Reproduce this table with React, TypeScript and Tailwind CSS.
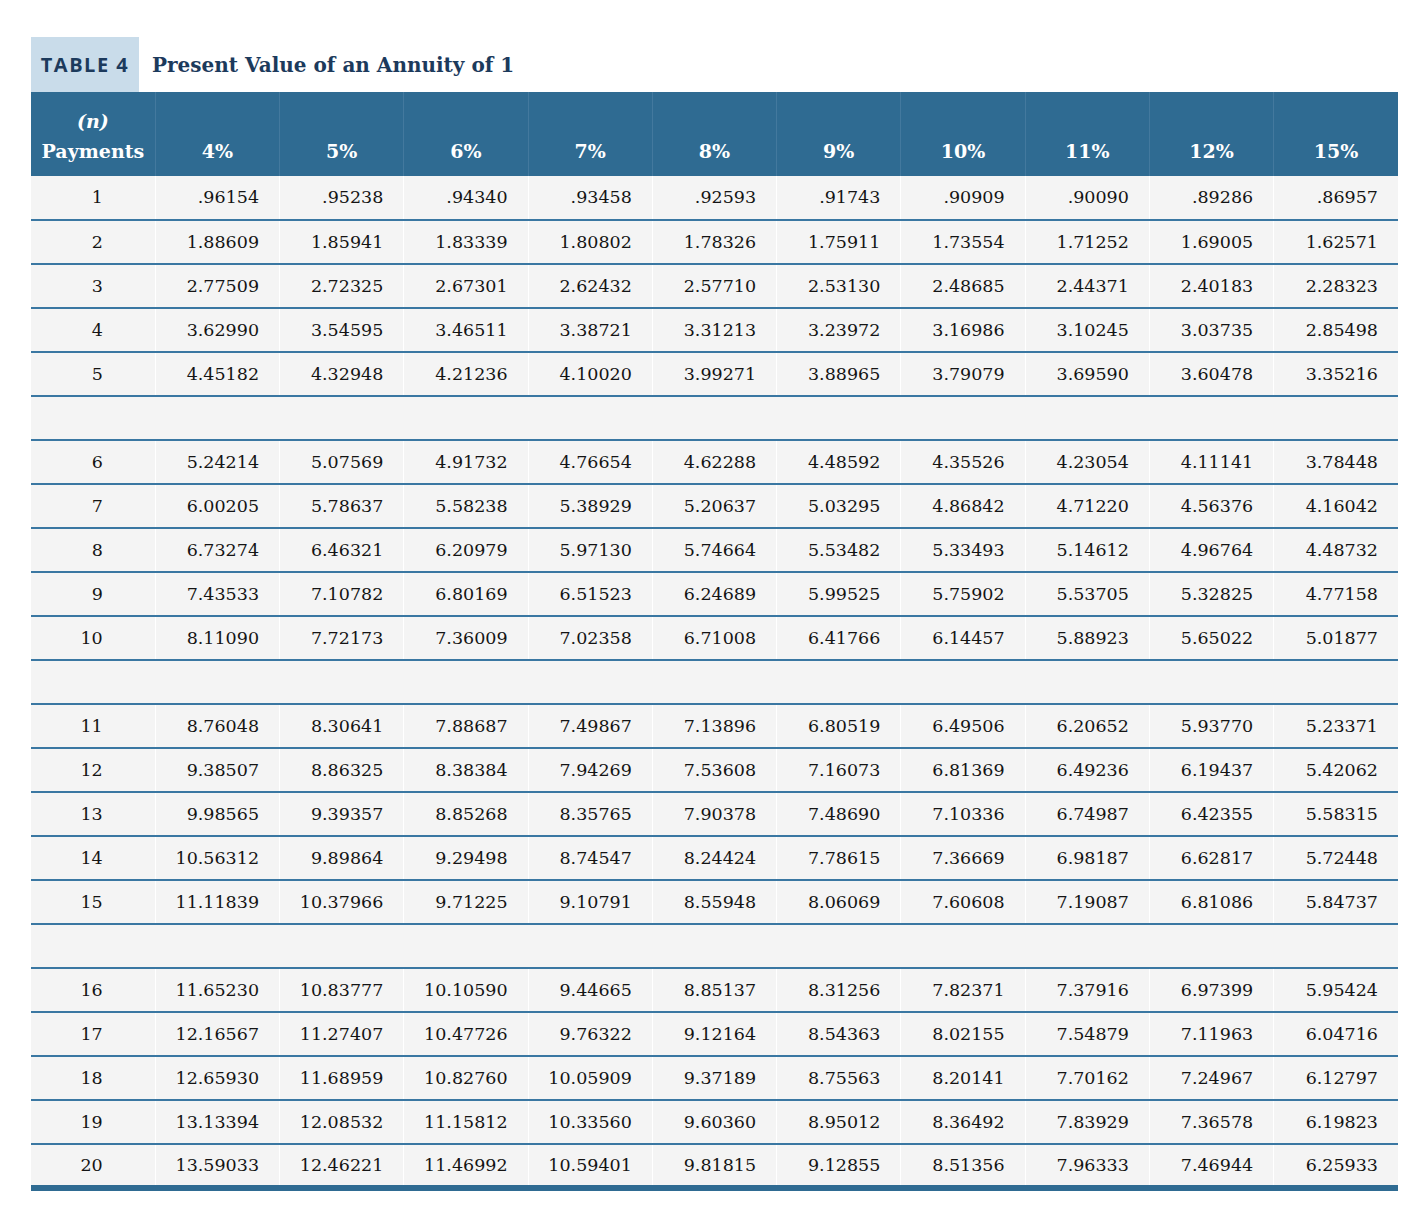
import React from "react";

const RATES = ["4%", "5%", "6%", "7%", "8%", "9%", "10%", "11%", "12%", "15%"];

const ROWS: string[][] = [
  [".96154", ".95238", ".94340", ".93458", ".92593", ".91743", ".90909", ".90090", ".89286", ".86957"],
  ["1.88609", "1.85941", "1.83339", "1.80802", "1.78326", "1.75911", "1.73554", "1.71252", "1.69005", "1.62571"],
  ["2.77509", "2.72325", "2.67301", "2.62432", "2.57710", "2.53130", "2.48685", "2.44371", "2.40183", "2.28323"],
  ["3.62990", "3.54595", "3.46511", "3.38721", "3.31213", "3.23972", "3.16986", "3.10245", "3.03735", "2.85498"],
  ["4.45182", "4.32948", "4.21236", "4.10020", "3.99271", "3.88965", "3.79079", "3.69590", "3.60478", "3.35216"],
  ["5.24214", "5.07569", "4.91732", "4.76654", "4.62288", "4.48592", "4.35526", "4.23054", "4.11141", "3.78448"],
  ["6.00205", "5.78637", "5.58238", "5.38929", "5.20637", "5.03295", "4.86842", "4.71220", "4.56376", "4.16042"],
  ["6.73274", "6.46321", "6.20979", "5.97130", "5.74664", "5.53482", "5.33493", "5.14612", "4.96764", "4.48732"],
  ["7.43533", "7.10782", "6.80169", "6.51523", "6.24689", "5.99525", "5.75902", "5.53705", "5.32825", "4.77158"],
  ["8.11090", "7.72173", "7.36009", "7.02358", "6.71008", "6.41766", "6.14457", "5.88923", "5.65022", "5.01877"],
  ["8.76048", "8.30641", "7.88687", "7.49867", "7.13896", "6.80519", "6.49506", "6.20652", "5.93770", "5.23371"],
  ["9.38507", "8.86325", "8.38384", "7.94269", "7.53608", "7.16073", "6.81369", "6.49236", "6.19437", "5.42062"],
  ["9.98565", "9.39357", "8.85268", "8.35765", "7.90378", "7.48690", "7.10336", "6.74987", "6.42355", "5.58315"],
  ["10.56312", "9.89864", "9.29498", "8.74547", "8.24424", "7.78615", "7.36669", "6.98187", "6.62817", "5.72448"],
  ["11.11839", "10.37966", "9.71225", "9.10791", "8.55948", "8.06069", "7.60608", "7.19087", "6.81086", "5.84737"],
  ["11.65230", "10.83777", "10.10590", "9.44665", "8.85137", "8.31256", "7.82371", "7.37916", "6.97399", "5.95424"],
  ["12.16567", "11.27407", "10.47726", "9.76322", "9.12164", "8.54363", "8.02155", "7.54879", "7.11963", "6.04716"],
  ["12.65930", "11.68959", "10.82760", "10.05909", "9.37189", "8.75563", "8.20141", "7.70162", "7.24967", "6.12797"],
  ["13.13394", "12.08532", "11.15812", "10.33560", "9.60360", "8.95012", "8.36492", "7.83929", "7.36578", "6.19823"],
  ["13.59033", "12.46221", "11.46992", "10.59401", "9.81815", "9.12855", "8.51356", "7.96333", "7.46944", "6.25933"],
];

const serif = { fontFamily: '"DejaVu Serif", "Liberation Serif", serif' };

function DataRow({ n, values, last }: { n: number; values: string[]; last: boolean }) {
  return (
    <tr className={last ? "border-b-[6px] border-[#2f6b92]" : "border-b-2 border-[#3a77a2]"}>
      <td className="h-[44px] border-r border-white pr-[52px] text-right">{n}</td>
      {values.map((v, i) => (
        <td key={i} className="h-[44px] border-r border-white pr-[20px] text-right last:border-r-0">
          {v}
        </td>
      ))}
    </tr>
  );
}

function BlankRow() {
  return (
    <tr className="border-b-2 border-[#3a77a2]">
      <td colSpan={11} className="h-[44px]" />
    </tr>
  );
}

export default function App() {
  const body: React.ReactNode[] = [];
  ROWS.forEach((values, i) => {
    const n = i + 1;
    body.push(<DataRow key={n} n={n} values={values} last={n === 20} />);
    if (n % 5 === 0 && n !== 20) body.push(<BlankRow key={`b${n}`} />);
  });

  return (
    <div className="min-h-[1230px] bg-white pl-[31px] pt-[37px]">
      <div className="w-[1367px]">
        <div className="flex h-[55px] items-center">
          <div
            className="flex h-full w-[108px] items-center justify-center bg-[#c9dcea] text-[20px] font-bold tracking-[1.5px] text-[#1c3a5c]"
            style={{ fontFamily: '"Open Sans", sans-serif' }}
          >
            TABLE 4
          </div>
          <div className="pl-[13px] text-[20px] font-bold text-[#1c3a5c]" style={serif}>
            Present Value of an Annuity of 1
          </div>
        </div>
        <table className="w-full table-fixed border-collapse bg-[#f4f4f4] text-[17.5px] text-[#141414]" style={serif}>
          <thead>
            <tr className="bg-[#2f6b92] text-white">
              <th className="h-[84px] border-r border-[#43799e] pb-[10px] align-bottom text-[19px] font-bold leading-[30px]">
                <div className="italic">(n)</div>
                <div>Payments</div>
              </th>
              {RATES.map((r, i) => (
                <th
                  key={r}
                  className={
                    "h-[84px] border-r border-[#43799e] pb-[10px] align-bottom text-[19px] font-bold leading-[30px]" +
                    (i === RATES.length - 1 ? " border-r-0" : "")
                  }
                >
                  {r}
                </th>
              ))}
            </tr>
          </thead>
          <tbody>{body}</tbody>
        </table>
      </div>
    </div>
  );
}
